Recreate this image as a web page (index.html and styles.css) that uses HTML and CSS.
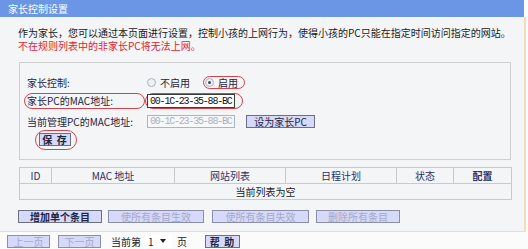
FILE: index.html
```html
<!DOCTYPE html>
<html lang="zh-CN">
<head>
    <meta charset="UTF-8">
    <title>家长控制设置</title>
    <link rel="stylesheet" href="styles.css">
</head>
<body>
    <div class="title">家长控制设置</div>
    <div class="main">
        <p class="intro">作为家长，您可以通过本页面进行设置，控制小孩的上网行为，使得小孩的PC只能在指定时间访问指定的网站。<br><span class="warn">不在规则列表中的非家长PC将无法上网。</span></p>

        <div class="box">
            <div class="row row1">
                <span class="label">家长控制:</span>
                <span class="opt"><i class="radio"></i>不启用</span>
                <span class="opt mark"><i class="radio on"></i>启用</span>
            </div>
            <div class="row row2">
                <span class="label mark">家长PC的MAC地址:</span>
                <span class="mark field"><input class="mac" type="text" value="00-1C-23-35-88-BC"></span>
            </div>
            <div class="row row3">
                <span class="label">当前管理PC的MAC地址:</span>
                <input class="mac" type="text" value="00-1C-23-35-88-BC" disabled>
                <button class="btn set">设为家长PC</button>
            </div>
            <div class="row row4">
                <span class="mark save"><button class="btn">保&nbsp;存</button></span>
            </div>
        </div>

        <table class="rules">
            <thead>
                <tr>
                    <th class="c-id">ID</th>
                    <th class="c-mac">MAC 地址</th>
                    <th class="c-site">网站列表</th>
                    <th class="c-plan">日程计划</th>
                    <th class="c-state">状态</th>
                    <th class="c-conf">配置</th>
                </tr>
            </thead>
            <tbody>
                <tr><td colspan="6">当前列表为空</td></tr>
            </tbody>
        </table>

        <div class="actions">
            <button class="btn add">增加单个条目</button>
            <button class="btn on-all" disabled>使所有条目生效</button>
            <button class="btn off-all" disabled>使所有条目失效</button>
            <button class="btn del-all" disabled>删除所有条目</button>
        </div>
    </div>

    <div class="pager">
        <button class="btn page" disabled>上一页</button>
        <button class="btn page" disabled>下一页</button>
        <span class="current">当前第</span>
        <span class="select">1 <i class="arrow"></i></span>
        <span class="unit">页</span>
        <button class="btn help">帮&nbsp;助</button>
    </div>
</body>
</html>
```

FILE: styles.css
```css
body {
    margin: 0;
    font-family: "Noto Sans CJK SC", "Liberation Sans", sans-serif;
    font-size: 10px;
    color: #1a1a1a;
    background-color: #fbfbfb;
}
.title {
    width: 516px;
    height: 17px;
    line-height: 17px;
    padding-left: 8px;
    background-color: #6a96e5;
    color: white;
}
.main {
    width: 524px;
    border-right: 2px solid #f1dcbc;
    border-bottom: 1px solid #f1dcbc;
    background-color: #f4f5f7;
    padding-bottom: 8px;
}
.intro {
    margin: 0;
    padding: 9px 0 0 18px;
    line-height: 13px;
}
.warn {
    color: #e0232d;
}
.box {
    margin: 10px 0 0 19px;
    width: 483px;
    border: 1px solid #cfcfcf;
    padding: 10px 0 9px 7px;
}
.row {
    display: flex;
    align-items: center;
}
.row1 { height: 18px; }
.row2 { height: 20px; }
.row3 { height: 21px; }
.row4 { height: 20px; margin-top: -2px; }
.label {
    box-sizing: border-box;
    width: 120px;
    color: #1f2440;
}
.mark {
    border: 1px solid #d8434e;
    border-radius: 9px;
}
.label.mark {
    width: 121px;
    margin-left: -3px;
    padding-left: 2px;
    height: 16px;
    line-height: 14px;
}
.field {
    display: flex;
    padding: 0 7px 0 1px;
    height: 14px;
}
.opt {
    display: flex;
    align-items: center;
    color: #1f2440;
}
.opt.mark {
    margin-left: 13px;
    padding: 0 6px 0 1px;
    height: 11px;
}
.radio {
    display: inline-block;
    box-sizing: border-box;
    width: 9px;
    height: 9px;
    border: 1px solid #a9b3bd;
    border-radius: 50%;
    background-color: #eef0f2;
    margin-right: 4px;
    position: relative;
}
.radio.on::after {
    content: "";
    position: absolute;
    left: 2px;
    top: 2px;
    width: 3px;
    height: 3px;
    border-radius: 50%;
    background-color: #2f4b7a;
}
.mac {
    box-sizing: border-box;
    width: 88px;
    height: 14px;
    margin: 0;
    padding: 0 0 0 2px;
    border: 1px solid #3a3a3a;
    background-color: white;
    font-family: "Liberation Mono", monospace;
    font-size: 10px;
    letter-spacing: -1.2px;
    color: #111;
}
.mac:disabled {
    height: 13px;
    border-color: #a5b6c8;
    color: #a9b1be;
    background-color: #f7f8f9;
}
.btn {
    box-sizing: border-box;
    height: 13px;
    margin: 0;
    padding: 0;
    border: 1px solid #6b6f86;
    background-color: #d6d9f9;
    font-family: "Noto Sans CJK SC", "Liberation Sans", sans-serif;
    font-size: 10px;
    line-height: 11px;
    color: #1f2440;
}
.btn:disabled {
    color: #a4a8cc;
    border-color: #8a8ea6;
}
.set {
    width: 69px;
    margin-left: 11px;
}
.save {
    display: flex;
    align-items: center;
    margin-left: 8px;
    padding: 2px 5px 3px 3px;
    border-radius: 10px;
}
.save .btn {
    width: 32px;
    font-weight: bold;
    letter-spacing: 1px;
}
.rules {
    margin: 7px 0 0 19px;
    width: 486px;
    border-collapse: collapse;
    table-layout: fixed;
}
.rules th,
.rules td {
    height: 15px;
    padding: 0;
    border: 1px solid #c9c9c9;
    text-align: center;
    font-weight: normal;
    line-height: 14px;
}
.rules th {
    color: #27306a;
}
.rules th.c-conf {
    font-weight: bold;
}
.c-id { width: 31px; }
.c-mac { width: 122px; }
.c-site { width: 110px; }
.c-plan { width: 110px; }
.c-state { width: 56px; }
.c-conf { width: 57px; }
.actions {
    display: flex;
    margin: 10px 0 0 18px;
    height: 13px;
}
.add { width: 84px; font-weight: bold; }
.on-all { width: 96px; margin-left: 6px; }
.off-all { width: 97px; margin-left: 8px; }
.del-all { width: 84px; margin-left: 7px; }
.pager {
    display: flex;
    align-items: center;
    margin: 2px 0 0 7px;
    height: 14px;
}
.page {
    width: 43px;
    margin-right: 8px;
}
.current {
    margin-left: 2px;
}
.select {
    display: flex;
    align-items: center;
    margin-left: 4px;
    width: 24px;
    height: 13px;
    padding-left: 3px;
    background-color: white;
}
.arrow {
    display: inline-block;
    margin-left: 6px;
    border-left: 3px solid transparent;
    border-right: 3px solid transparent;
    border-top: 4px solid #222;
}
.unit {
    margin-left: 5px;
}
.help {
    width: 35px;
    margin-left: 18px;
    font-weight: bold;
    letter-spacing: 1px;
}
```
